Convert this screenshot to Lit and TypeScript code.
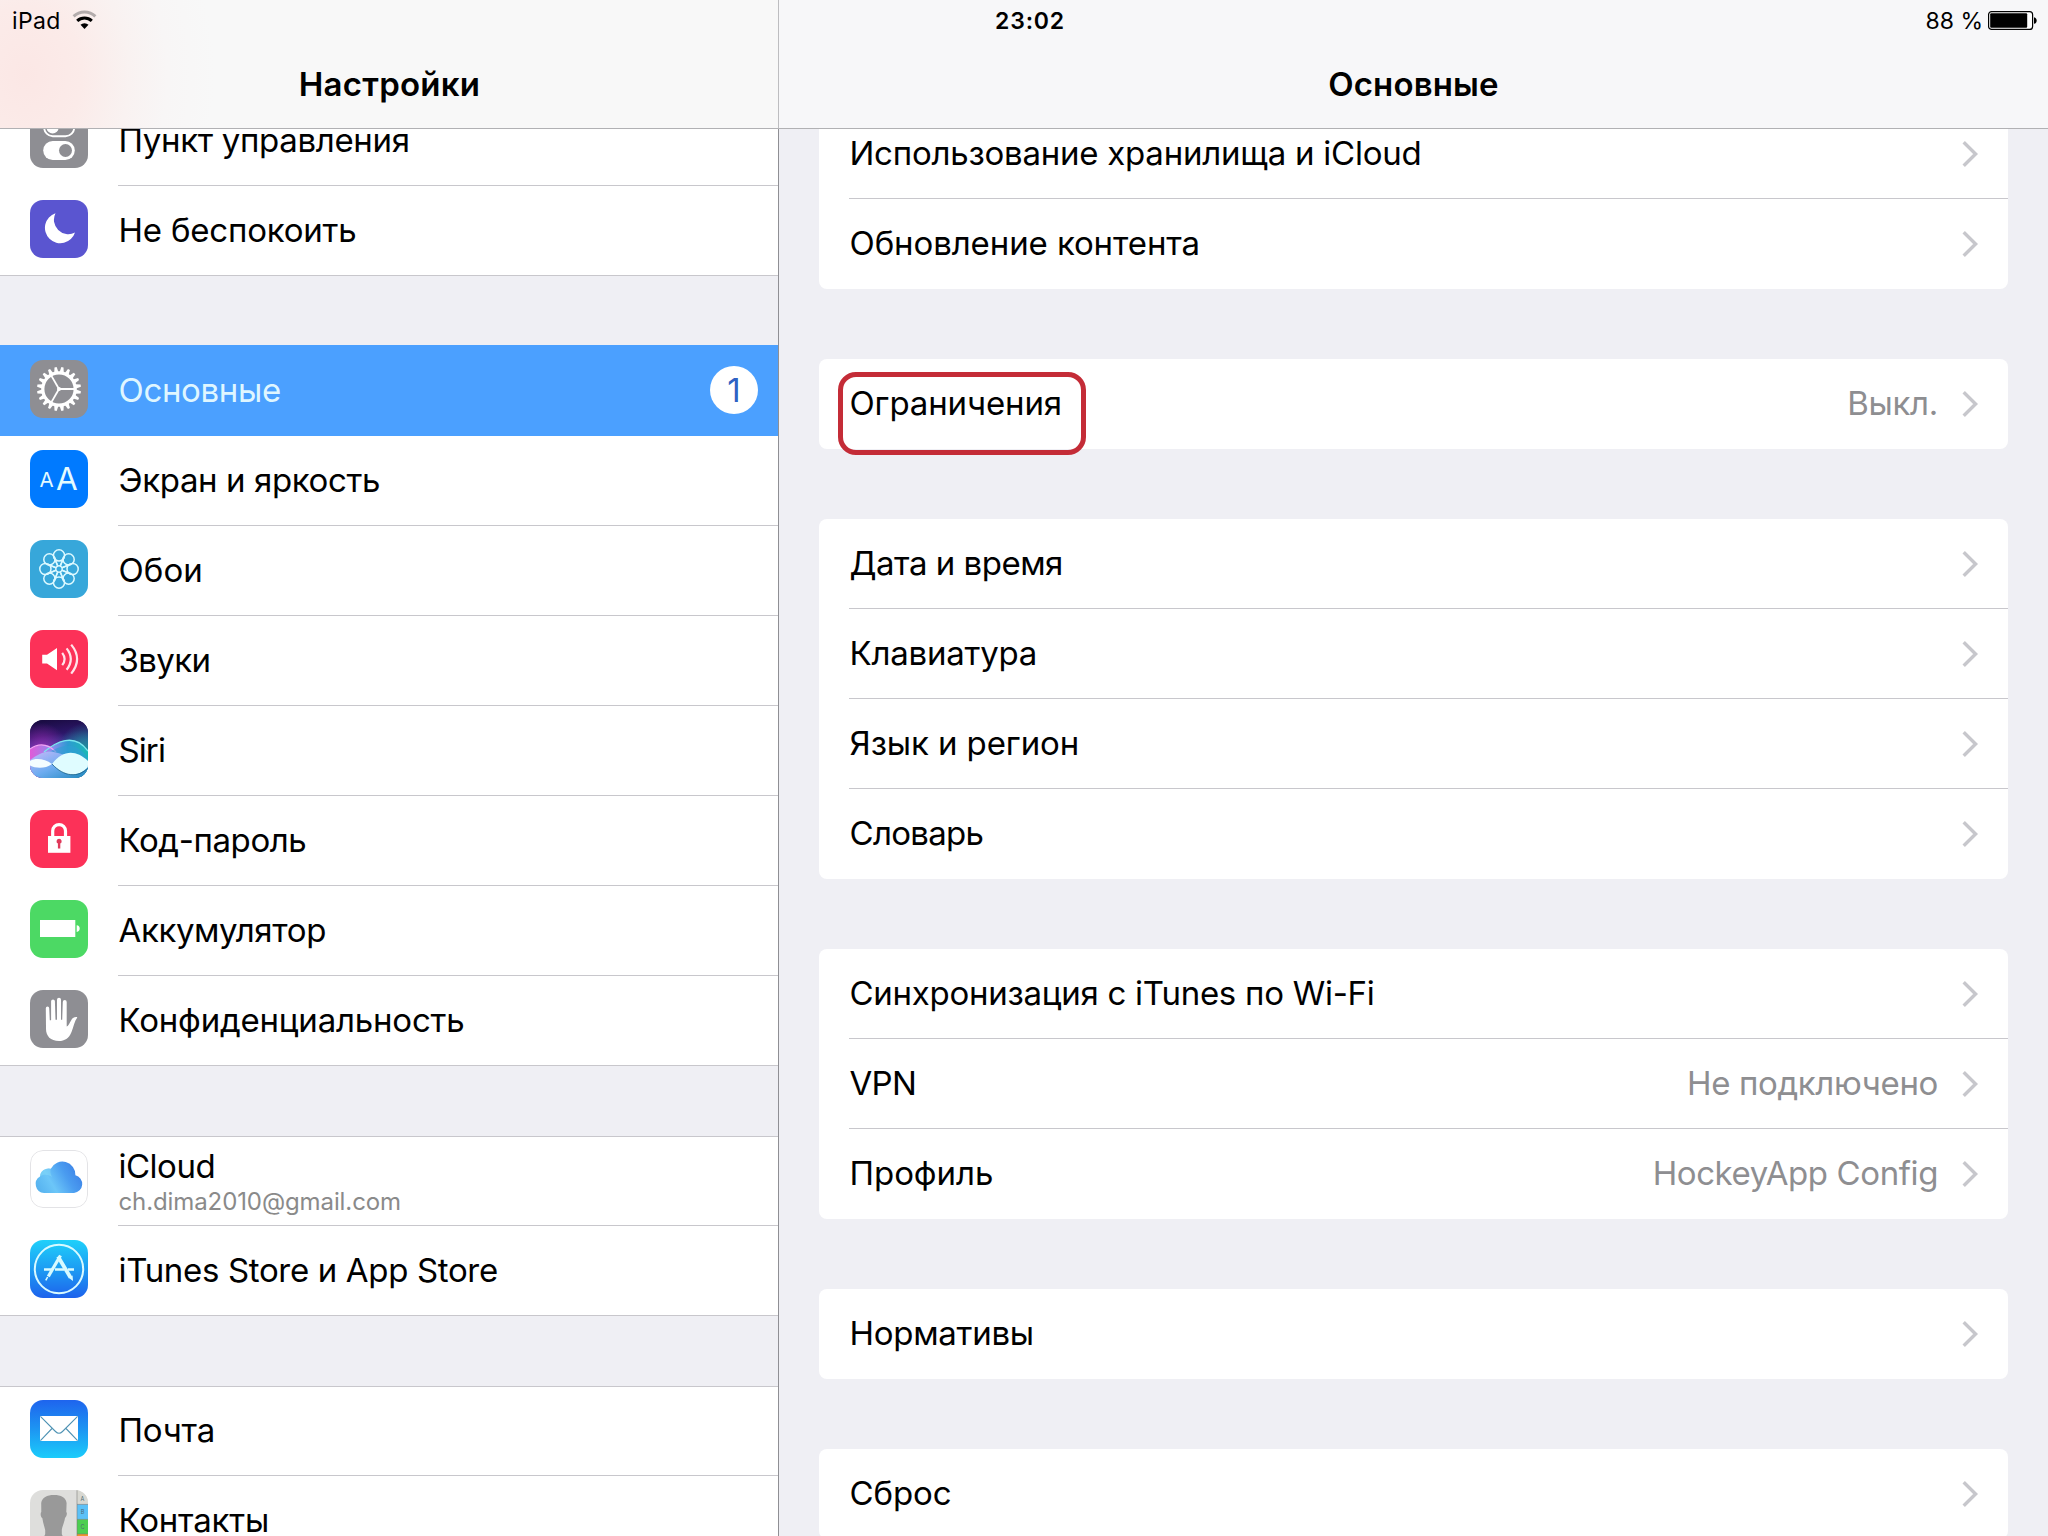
import { LitElement, html, svg, css, nothing, type TemplateResult } from "lit";
import { customElement, property } from "lit/decorators.js";
import { classMap } from "lit/directives/class-map.js";
import { styleMap } from "lit/directives/style-map.js";

interface Item {
  label: string;
  /** Letter spacing of the label, px. */
  track?: number;
  icon?: string;
  sub?: string;
  value?: string;
  valueTrack?: number;
  badge?: string;
  selected?: boolean;
  marked?: boolean;
}

const SIDEBAR: Item[][] = [
  [
    { label: "Пункт управления", track: -0.33, icon: "control" },
    { label: "Не беспокоить", track: -0.2, icon: "moon" },
  ],
  [
    { label: "Основные", track: -0.35, icon: "gear", badge: "1", selected: true },
    { label: "Экран и яркость", track: -0.38, icon: "display" },
    { label: "Обои", track: 0.1, icon: "wallpaper" },
    { label: "Звуки", track: -0.6, icon: "sound" },
    { label: "Siri", track: -0.9, icon: "siri" },
    { label: "Код-пароль", track: -0.4, icon: "lock" },
    { label: "Аккумулятор", track: -0.38, icon: "battery" },
    { label: "Конфиденциальность", track: -0.2, icon: "hand" },
  ],
  [
    { label: "iCloud", track: -0.5, icon: "cloud", sub: "ch.dima2010@gmail.com" },
    { label: "iTunes Store и App Store", track: -0.34, icon: "store" },
  ],
  [
    { label: "Почта", track: -0.2, icon: "mail" },
    { label: "Контакты", track: -0.2, icon: "contacts" },
  ],
];

const DETAIL: Item[][] = [
  [
    { label: "Использование хранилища и iCloud", track: -0.24 },
    { label: "Обновление контента", track: -0.1 },
  ],
  [{ label: "Ограничения", track: -0.12, value: "Выкл.", valueTrack: -0.3, marked: true }],
  [
    { label: "Дата и время", track: -0.5 },
    { label: "Клавиатура", track: -0.22 },
    { label: "Язык и регион", track: -0.1 },
    { label: "Словарь", track: -0.7 },
  ],
  [
    { label: "Синхронизация с iTunes по Wi-Fi", track: -0.27 },
    { label: "VPN", track: -0.7, value: "Не подключено", valueTrack: -0.35 },
    { label: "Профиль", track: -0.05, value: "HockeyApp Config", valueTrack: -0.4 },
  ],
  [{ label: "Нормативы", track: -0.28 }],
  [{ label: "Сброс", track: -0.1 }],
];

const angles = (n: number) => Array.from({ length: n }, (_, i) => (i * 360) / n);

const ICONS: Record<string, { bg: string; art: TemplateResult }> = {
  control: {
    bg: "#8e8e93",
    art: svg`<rect x="14.2" y="9" width="30" height="17.2" rx="8.6" fill="none" stroke="#fff" stroke-width="1.9"/>
      <circle cx="22.6" cy="17.6" r="6" fill="#fff"/>
      <rect x="13.2" y="31" width="31.6" height="19" rx="9.5" fill="#fff"/><circle cx="35.5" cy="40.5" r="6.5" fill="#8e8e93"/>`,
  },
  moon: {
    bg: "#5a55d0",
    art: svg`<path fill="#fff" d="M25.5 13.2A15.4 15.4 0 1 0 45 32.5A14.4 14.4 0 0 1 25.5 13.2Z"/>`,
  },
  gear: {
    bg: "#8e8e93",
    art: svg`<g transform="translate(29 29)" fill="none" stroke="#fff">
      <circle r="16.2" stroke-width="3.2"/>
      ${angles(20).map((a) => svg`<path transform=${`rotate(${a + 9})`} fill="#fff" stroke="none" d="M-2.1-17L-1.1-22H1.1L2.1-17Z"/>`)}
      ${angles(3).map((a) => svg`<path transform=${`rotate(${a})`} stroke-width="1.8" d="M0 0H16"/>`)}
      <circle r="2" fill="#fff" stroke="none"/></g>`,
  },
  display: {
    bg: "#007aff",
    art: svg`<text x="9.4" y="36.7" font-size="20.5" fill="#e4fbff">A</text><text x="26" y="40" font-size="31.5" font-weight="400" fill="#e4fbff">A</text>`,
  },
  wallpaper: {
    bg: "#37a7da",
    art: svg`<g transform="translate(29 29)" fill="none" stroke="#dcf9ff" stroke-width="1.5">
      ${angles(8).map((a) => svg`<g transform=${`rotate(${a})`}><circle cy="-13.6" r="5.6"/><path d="M-1.2-3.2L-4.9-11.2M1.2-3.2L4.9-11.2"/></g>`)}
      <circle r="3.2"/></g>`,
  },
  sound: {
    bg: "#fc3158",
    art: svg`<path fill="#fff" d="M12.2 24.8H17L27 18V40.2L17 33.6H12.2Z"/>
      <g fill="none" stroke="#ffe3e9" stroke-width="2.2"><path d="M32.2 22.8Q37 29 32.2 35.2"/><path d="M36.6 18.4Q45 29 36.6 39.8"/><path d="M41.2 14.6Q53 29 41.2 43.6"/></g>`,
  },
  siri: {
    bg: "#1a1050",
    art: svg`<defs>
        <linearGradient id="sky" x1="0" y1="0" x2="0.15" y2="1"><stop offset="0" stop-color="#170a3c"/><stop offset=".3" stop-color="#2c1668"/><stop offset=".5" stop-color="#3a3f9c"/></linearGradient>
        <linearGradient id="teal" x1="0" y1="0" x2="1" y2="0"><stop offset="0" stop-color="#e05ad8"/><stop offset=".38" stop-color="#8f8cf0"/><stop offset=".65" stop-color="#2e9ad2"/><stop offset="1" stop-color="#19b9b4"/></linearGradient>
        <linearGradient id="deep" x1="0" y1="0" x2="1" y2="1"><stop offset="0" stop-color="#c9b8fa"/><stop offset=".5" stop-color="#6cacf0"/><stop offset="1" stop-color="#1d86bb"/></linearGradient>
        <radialGradient id="glow" cx=".2" cy=".5" r=".45"><stop offset="0" stop-color="#a62cb8" stop-opacity=".8"/><stop offset="1" stop-color="#a62cb8" stop-opacity="0"/></radialGradient>
        <radialGradient id="glow2" cx=".95" cy=".5" r=".45"><stop offset="0" stop-color="#14a59c" stop-opacity=".8"/><stop offset="1" stop-color="#14a59c" stop-opacity="0"/></radialGradient></defs>
      <rect width="58" height="58" fill="url(#sky)"/><rect width="58" height="58" fill="url(#glow)"/><rect width="58" height="58" fill="url(#glow2)"/>
      <path fill="url(#teal)" d="M0 29C8 24 16 24 22 27C30 20 45 14 58 31V58H0Z"/>
      <path fill="none" stroke="#79e6ee" stroke-width="1.3" d="M14 32C26 22 44 12 58 31"/>
      <path fill="none" stroke="#f3a4f5" stroke-width="1.2" d="M0 29C10 22 19 25 26 32"/>
      <path fill="#2f9fd4" fill-opacity=".6" d="M8 38C24 30 42 15 58 38V50H8Z"/>
      <path fill="url(#deep)" d="M0 40C10 33 16 29 28 33L58 42V58H0Z"/>
      <path fill="#f4fdff" d="M0 41C6 37.5 15 39 22 44C15 49 6 48.5 0 45.5Z"/>
      <path fill="#dffcff" d="M22 44C33 29.5 46 29.5 58 41V47C48 58 34 57 22 44Z"/>
      <path fill="none" stroke="#175f86" stroke-width=".8" d="M22 44C34 57 48 58 58 48"/>`,
  },
  lock: {
    bg: "#fc3158",
    art: svg`<path fill="none" stroke="#fff" stroke-width="3.2" d="M22.7 27V21A6.4 6.4 0 0 1 35.5 21V27"/>
      <rect x="18" y="26" width="22.4" height="16.8" fill="#fff"/>
      <path fill="#e0395a" d="M29.1 28.7A2.6 2.6 0 0 1 30.3 33.6V38.6H27.9V33.6A2.6 2.6 0 0 1 29.1 28.7Z"/>`,
  },
  battery: {
    bg: "#4cd964",
    art: svg`<rect x="10" y="20" width="35.3" height="17" fill="#fff"/><path fill="#fff" d="M46.7 25.3C50.7 25.3 50.7 31.9 46.7 31.9Z"/>`,
  },
  hand: {
    bg: "#8e8e93",
    art: svg`<path fill="#fff" d="M15.8 18.2A1.7 1.7 0 0 1 19.2 18.2L19.8 30.3H21.1V11.3A1.9 1.9 0 0 1 24.9 11.3L25.5 29.7H27V9.8A2 2 0 0 1 31 9.8V29.7H32.2L32.8 12A1.9 1.9 0 0 1 36.7 12V36.5C39.5 35.5 40.5 29.5 43 27.9C44.5 27 46.8 26.8 47.3 27.4C44.5 31 43.5 37 41.5 42C39 48.5 34.5 51 29 51C20.5 51 16 46 16 39Z"/>`,
  },
  cloud: {
    bg: "#fff",
    art: svg`<defs><linearGradient id="cl" x1="0" y1=".7" x2="1" y2=".3"><stop offset="0" stop-color="#58b4f0"/><stop offset=".3" stop-color="#6cc6f8"/><stop offset=".65" stop-color="#4a9cf0"/><stop offset="1" stop-color="#3b7fe6"/></linearGradient></defs>
      <rect x=".5" y=".5" width="57" height="57" rx="12.5" fill="none" stroke="#e3e3e6"/>
      <path fill="url(#cl)" d="M14 43A8.9 8.9 0 0 1 10 26.5A8.5 8.5 0 0 1 20.8 18.8A13 13 0 0 1 45.4 25.3A9 9 0 0 1 44 43Z"/>
      <path fill="#8fe0f7" fill-opacity=".4" d="M10 26.5A8.5 8.5 0 0 1 20.8 18.8C20 22 20.5 24 22 27C18 24 13 24 10 26.5Z"/>`,
  },
  store: {
    bg: "linear-gradient(#1fd0fa, #1d9cf3 50%, #1d62ec)",
    art: svg`<g fill="none" stroke="#d8faff"><circle cx="29" cy="29" r="24.2" stroke-width="2"/>
      <path stroke-width="3.2" d="M30.5 15.5L18.3 36.5"/><path stroke-width="1.6" d="M17.6 37L15.8 40.4"/>
      <path stroke-width="3.8" d="M28 16.5L40.5 37.5"/><path stroke="none" fill="#d8faff" d="M38.6 37.7L42.6 35.5L43 41Z"/>
      <path stroke-width="2.6" d="M14 29.5H22M25 29.5H34M38 29.5H44"/></g>`,
  },
  mail: {
    bg: "linear-gradient(#1e64ee, #1d95f2 50%, #1bccfb)",
    art: svg`<rect x="10" y="16" width="38" height="25" fill="#fff"/>
      <g fill="none" stroke="#4f93b4" stroke-width="1.1"><path d="M10.4 16.4L25.5 31.5Q29 35 32.5 31.5L47.6 16.4"/><path d="M10.4 40.6L22 28.5M47.6 40.6L36 28.5"/></g>`,
  },
  contacts: {
    bg: "#dededc",
    art: svg`<path fill="#999" d="M11.2 13C12 7.5 17 5 24 5S36 7.5 36.6 13L36.3 22C37.6 23 36.5 27 35 28C34.2 33 32 37 31.8 40V44C33 49 40 50 46 53V58H2V53C8 50 14 49 15.2 44V40C14.5 37 13 33 12.3 28C10.5 27 10.2 23 11.3 22Z"/>
      <rect x="47" width="11" height="14.4" fill="#d8d8d2"/><rect x="47" y="14.4" width="11" height="15" fill="#5cc1f7"/><rect x="47" y="29.4" width="11" height="14.6" fill="#4ccf50"/><rect x="47" y="44" width="11" height="14" fill="#f0962c"/>
      <path stroke="#777" stroke-opacity=".7" stroke-width=".8" d="M47 0V58M47 14.4H58M47 29.4H58M47 44H58"/>
      <g font-size="5.5" fill="#4a6a74" text-anchor="middle"><text x="52.5" y="11">A</text><text x="52.5" y="24">B</text><text x="52.5" y="39">C</text></g>`,
  },
};

@customElement("app-icon")
export class AppIcon extends LitElement {
  @property() name = "";

  static styles = css`
    :host { display: block; width: 58px; height: 58px; border-radius: 13px; overflow: hidden; }
    .tile { width: 58px; height: 58px; }
    svg { display: block; font-family: Inter, "Liberation Sans", sans-serif; }
  `;

  render() {
    const icon = ICONS[this.name];
    return html`<div class="tile" style=${styleMap({ background: icon.bg })}>
      <svg width="58" height="58" viewBox="0 0 58 58">${icon.art}</svg>
    </div>`;
  }
}

const text = css`
  .label, .value, .sub { white-space: nowrap; }
  .label, .value { font-size: 33px; line-height: 88px; }
`;

@customElement("side-row")
export class SideRow extends LitElement {
  @property({ attribute: false }) item!: Item;
  @property({ type: Boolean }) last = false;

  static styles = [text, css`
    :host { display: block; position: relative; }
    .row { display: flex; height: 90px; box-sizing: border-box; padding-left: 30px; background: #fff; }
    .row.selected { height: 91px; margin-top: -1px; padding-top: 1px; background: #4ba0ff; color: #dff6ff; }
    .glyph { margin-top: 14px; }
    .body { flex: 1; display: flex; margin-left: 30px; height: 90px; box-sizing: border-box; border-bottom: 1px solid #c8c7cc; }
    .last .body, .selected .body { border-bottom-color: transparent; }
    .texts { flex: 1; padding-left: 0.5px; }
    .stacked .label { line-height: 40px; padding-top: 10px; }
    .sub { font-size: 24px; line-height: 30px; color: #8a8a8a; letter-spacing: -0.1px; padding-top: 1px; }
    .badge { width: 48px; height: 48px; margin: 20px 20px 0 0; border-radius: 50%; background: #fff; color: #2f62c4;
      font-size: 33px; line-height: 48px; text-align: center; }
  `];

  render() {
    const { label, track = 0, icon = "", sub, badge, selected = false } = this.item;
    return html`<div class=${classMap({ row: true, selected, last: this.last })}>
      <app-icon class="glyph" name=${icon}></app-icon>
      <div class="body">
        <div class=${classMap({ texts: true, stacked: !!sub })}>
          <div class="label" style=${styleMap({ letterSpacing: `${track}px` })}>${label}</div>
          ${sub ? html`<div class="sub">${sub}</div>` : nothing}
        </div>
        ${badge ? html`<div class="badge">${badge}</div>` : nothing}
      </div>
    </div>`;
  }
}

@customElement("detail-row")
export class DetailRow extends LitElement {
  @property({ attribute: false }) item!: Item;
  @property({ type: Boolean }) last = false;

  static styles = [text, css`
    :host { display: block; position: relative; }
    .row { display: flex; height: 90px; box-sizing: border-box; margin-left: 30px; padding-right: 29px; border-bottom: 1px solid #c8c7cc; }
    .row.last { border-bottom-color: transparent; }
    .label { flex: 1; padding-left: 0.5px; }
    .value { color: #8e8e91; margin-right: 23px; }
    .chevron { margin-top: 31px; }
    .mark { position: absolute; left: 19px; top: 13px; width: 248px; height: 83px; box-sizing: border-box;
      border: 5px solid #c42c37; border-radius: 18px; z-index: 1; }
  `];

  render() {
    const { label, track = 0, value, valueTrack = 0, marked } = this.item;
    return html`<div class=${classMap({ row: true, last: this.last })}>
        <div class="label" style=${styleMap({ letterSpacing: `${track}px` })}>${label}</div>
        ${value ? html`<div class="value" style=${styleMap({ letterSpacing: `${valueTrack}px` })}>${value}</div>` : nothing}
        <svg class="chevron" width="18" height="28" viewBox="0 0 18 28"><path d="M2.7 2.2L14.6 14L2.7 25.8" fill="none" stroke="#c7c7cc" stroke-width="3.4"/></svg>
      </div>
      ${marked ? html`<div class="mark"></div>` : nothing}`;
  }
}

@customElement("app-root")
export class AppRoot extends LitElement {
  static styles = css`
    :host { display: block; position: relative; width: 2048px; height: 1536px; overflow: hidden;
      font-family: Inter, "Liberation Sans", sans-serif; color: #000; background: #efeff4; }
    .split { display: grid; grid-template-columns: 778px 1fr; height: 100%; }
    .pane { display: flex; flex-direction: column; min-height: 0; height: 1536px; }
    .pane.detail { border-left: 1px solid #8f8f94; }
    .bar { flex: none; height: 129px; box-sizing: border-box; border-bottom: 1px solid #b1b1b4; z-index: 2;
      font-size: 33px; font-weight: 600; line-height: 40px; padding-top: 64px; text-align: center; }
    .pane.side .bar { background: radial-gradient(ellipse 190px 230px at 25px 75px, #fbe7e5 0%, #fbebe9 30%, #f9f2f1 55%, #f8f6f6 75%, #f8f8f8 100%);
      letter-spacing: 0.25px; padding-left: 1px; }
    .pane.detail .bar { background: #f7f7f9; letter-spacing: 0.15px; margin-left: -1px; border-left: 1px solid #bdbdc0; }
    .scroll { flex: 1; min-height: 0; overflow: hidden; display: flex; flex-direction: column; }
    .side .list { margin-top: -33px; display: flex; flex-direction: column; gap: 70px; }
    .side .group { position: relative; }
    .side .group::before, .side .group::after { content: ""; position: absolute; left: 0; right: 0; height: 1px; background: #c8c7cc; z-index: 1; }
    .side .group::before { top: 0; }
    .side .group::after { bottom: 0; }
    .side .group.flush::before { display: none; }
    .detail .list { margin: -20px 40px 0; display: flex; flex-direction: column; gap: 70px; }
    .detail .group { background: #fff; border-radius: 8px; }
    .status { position: absolute; inset: 0 0 auto 0; z-index: 3; display: grid; grid-template-columns: 1fr auto 1fr; height: 42px;
      font-size: 23px; line-height: 42px; padding: 0 10px 0 12px; box-sizing: border-box; }
    .left, .right { display: flex; }
    .left { letter-spacing: 0.4px; }
    .right { justify-content: flex-end; }
    .time { font-weight: 600; letter-spacing: 0.85px; margin-left: 10px; }
    .wifi { margin: 10px 0 0 11.5px; }
    .cell { margin: 10px 0 0 5px; }
  `;

  render() {
    return html`
      <div class="split">
        <section class="pane side">
          <header class="bar">Настройки</header>
          <div class="scroll"><div class="list">
            ${SIDEBAR.map((g) => html`<div class=${classMap({ group: true, flush: !!g[0].selected })}>
              ${g.map((it, i) => html`<side-row .item=${it} ?last=${i === g.length - 1}></side-row>`)}
            </div>`)}
          </div></div>
        </section>
        <section class="pane detail">
          <header class="bar">Основные</header>
          <div class="scroll"><div class="list">
            ${DETAIL.map((g) => html`<div class="group">
              ${g.map((it, i) => html`<detail-row .item=${it} ?last=${i === g.length - 1}></detail-row>`)}
            </div>`)}
          </div></div>
        </section>
      </div>
      <div class="status">
        <div class="left">iPad
          <svg class="wifi" width="26" height="20" viewBox="0 0 26 20">
            <path d="M1.6 6.4A16 16 0 0 1 23.4 6.4" fill="none" stroke="#b3acac" stroke-width="3"/>
            <path d="M5.2 10.9A10.6 10.6 0 0 1 19.8 10.9" fill="none" stroke="#000" stroke-width="3"/>
            <path d="M12.5 19L8.5 14.8A5.7 5.7 0 0 1 16.5 14.8Z"/>
          </svg>
        </div>
        <div class="time">23:02</div>
        <div class="right">88 %
          <svg class="cell" width="50" height="21" viewBox="0 0 50 21">
            <rect x=".6" y="1.6" width="44" height="17.8" rx="3" fill="#fff" stroke="#000" stroke-width="1.2"/>
            <rect x="2.2" y="3.2" width="37" height="14.6" rx="1"/>
            <path d="M46 7.2C49.6 7.6 49.6 13.4 46 13.8Z"/>
          </svg>
        </div>
      </div>`;
  }
}
